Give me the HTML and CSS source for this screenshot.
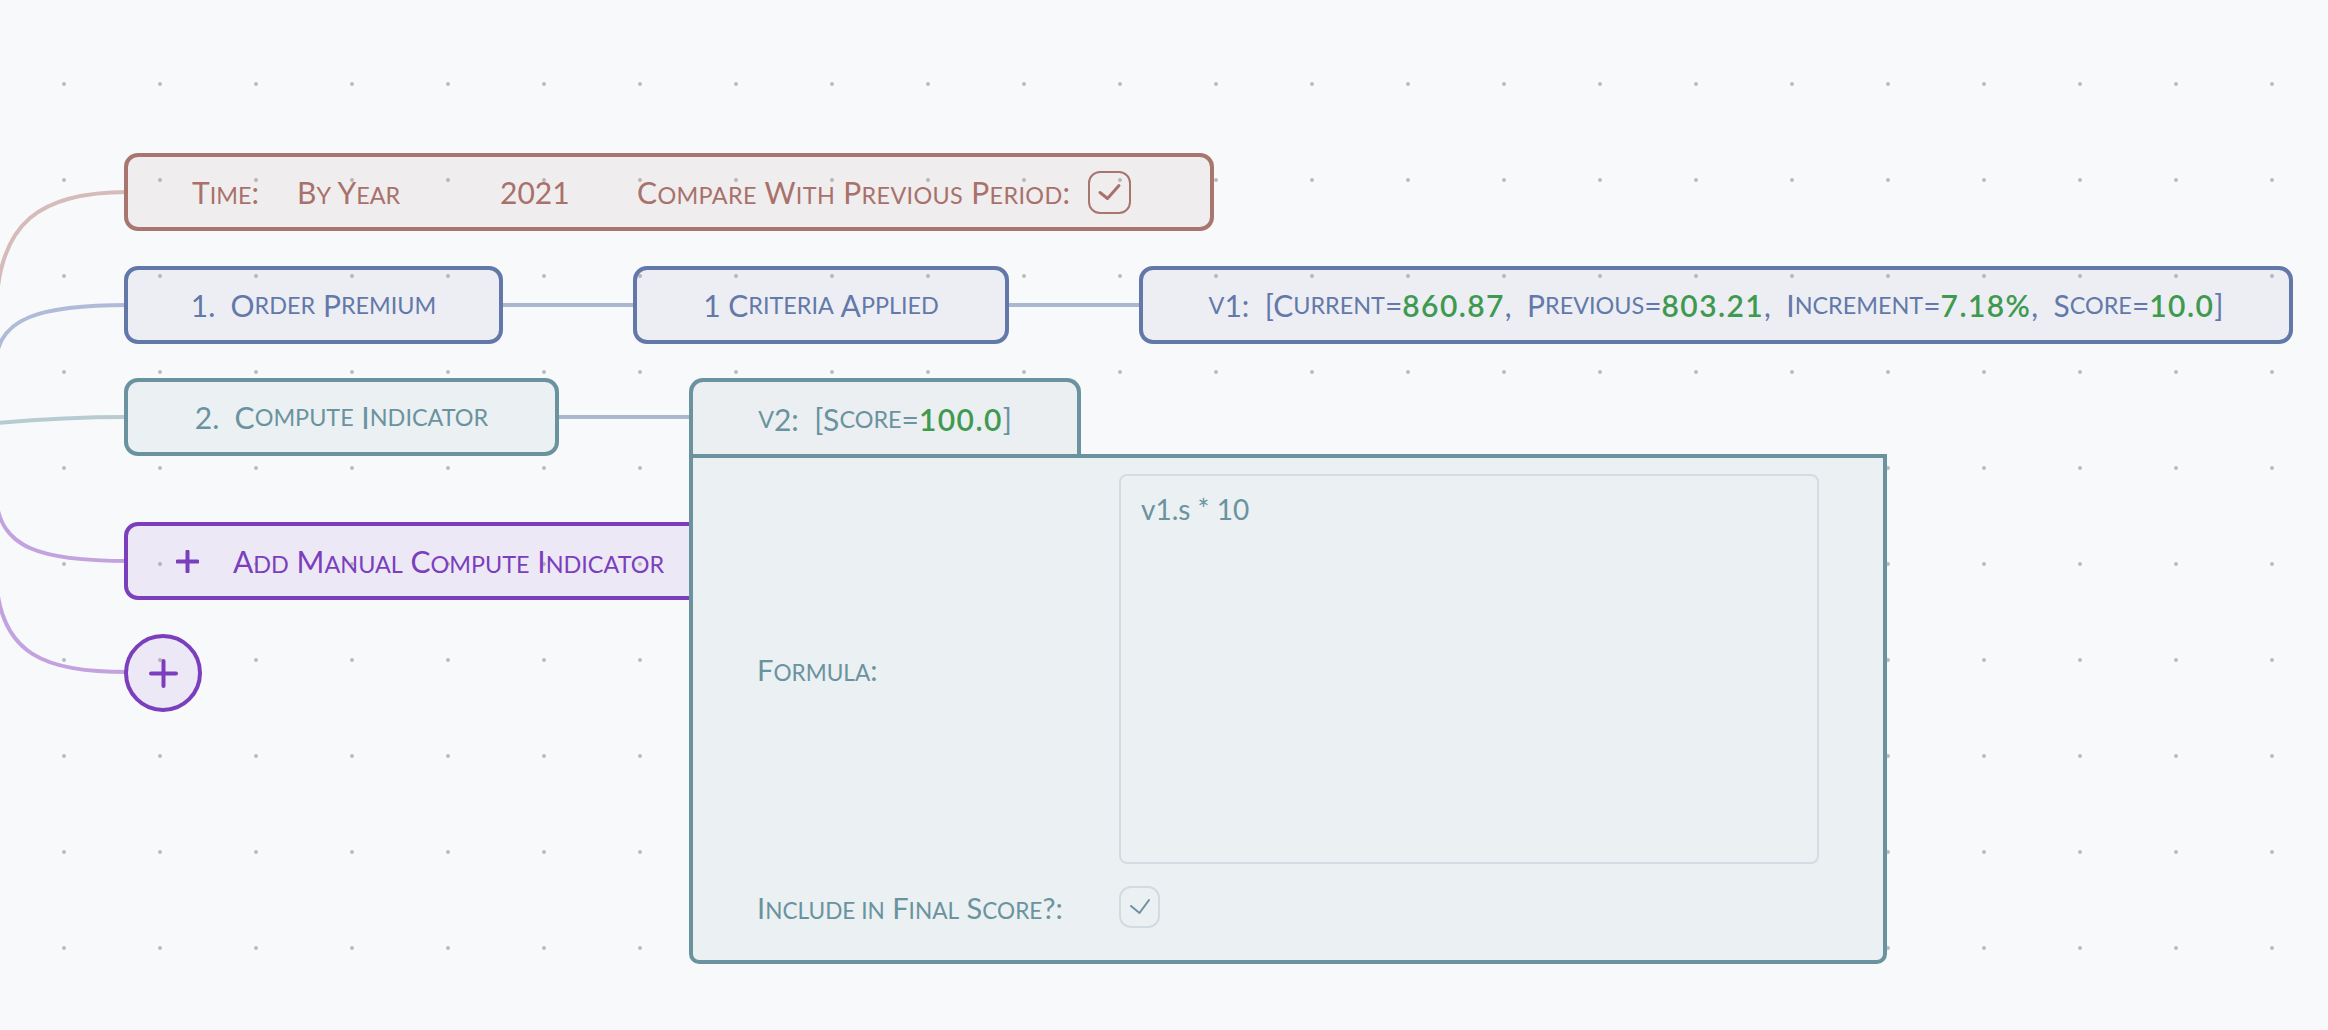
FILE: index.html
```html
<!DOCTYPE html>
<html>
<head>
<meta charset="utf-8">
<title>Flow</title>
<link rel="stylesheet" href="styles.css">
</head>
<body>
<div class="canvas">
  <svg class="edges" width="2328" height="1030" viewBox="0 0 2328 1030">
    <path class="e e-time" d="M -4 312 C -2 222, 40 192, 128 192"/>
    <path class="e e-blue" d="M -4 362 C -2 318, 40 305, 128 305"/>
    <path class="e e-teal" d="M -4 423 C 40 419, 80 417, 128 417"/>
    <path class="e e-purple" d="M -4 498 C 0 548, 40 561, 128 561"/>
    <path class="e e-purple" d="M -4 578 C 0 655, 45 672, 128 672"/>
  </svg>

  <div class="flow">
    <div class="row">
      <div class="node time">
        <span class="t-key">T<small>ime</small>:</span>
        <span class="t-sel">B<small>y</small> Y<small>ear</small></span>
        <span class="t-year">2021</span>
        <span class="t-cmp">C<small>ompare</small> W<small>ith</small> P<small>revious</small> P<small>eriod</small>:</span>
        <span class="chk chk-time">
          <svg width="43" height="43" viewBox="0 0 43 43"><path d="M12 21.5 L19.5 27.5 L31 14.5"/></svg>
        </span>
      </div>
    </div>

    <div class="row row-order">
      <div class="node blue n-order">1.  O<small>rder</small> P<small>remium</small></div>
      <div class="link"></div>
      <div class="node blue n-crit">1 C<small>riteria</small> A<small>pplied</small></div>
      <div class="link"></div>
      <div class="node blue n-v1"><small>v</small>1:  [C<small>urrent</small>=<b>860.87</b>,  P<small>revious</small>=<b>803.21</b>,  I<small>ncrement</small>=<b>7.18%</b>,  S<small>core</small>=<b>10.0</b>]</div>
    </div>

    <div class="row row-compute">
      <div class="node teal n-compute">2.  C<small>ompute</small> I<small>ndicator</small></div>
      <div class="link"></div>
      <div class="v2">
        <div class="tab"><small>v</small>2:  [S<small>core</small>=<b>100.0</b>]</div>
        <div class="panel">
          <div class="p-label">F<small>ormula</small>:</div>
          <textarea class="formula" spellcheck="false">v1.s * 10</textarea>
          <div class="p-label">I<small>nclude in</small> F<small>inal</small> S<small>core</small>?:</div>
          <div class="chk chk-inc">
            <svg width="41" height="42" viewBox="0 0 41 42"><path d="M12 20 L20.5 27 L30 14"/></svg>
          </div>
        </div>
      </div>
    </div>

    <div class="row row-add">
      <div class="node purple n-add">
        <svg class="plus-sm" width="23" height="23" viewBox="0 0 23 23"><path d="M11.5 1.5 V21.5 M1.5 11.5 H21.5"/></svg>
        <span>A<small>dd</small> M<small>anual</small> C<small>ompute</small> I<small>ndicator</small></span>
      </div>
    </div>

    <div class="row">
      <div class="circle">
        <svg width="29" height="29" viewBox="0 0 29 29"><path d="M14.5 2 V27 M2 14.5 H27"/></svg>
      </div>
    </div>
  </div>
</div>
</body>
</html>
```

FILE: styles.css
```css
* { box-sizing: border-box; }

html, body {
  margin: 0;
  padding: 0;
}

body {
  background: #f8f9fb;
  font-family: Lato, "Open Sans", "Liberation Sans", sans-serif;
}

.canvas {
  position: relative;
  width: 2328px;
  height: 1030px;
  overflow: hidden;
  background-color: #f8f9fb;
  background-image: radial-gradient(circle, #bdbdbd 1.5px, rgba(189,189,189,0) 2.3px);
  background-size: 96px 96px;
  background-position: 16px 36px;
}

.edges {
  position: absolute;
  left: 0;
  top: 0;
  z-index: 0;
}

.e { fill: none; stroke-width: 4; }
.e-time { stroke: #d5bbb9; }
.e-blue { stroke: #b0bcd7; }
.e-teal { stroke: #b7cbd1; }
.e-purple { stroke: #c3a3df; }

.flow {
  position: relative;
  z-index: 1;
  padding: 153px 0 0 124px;
  display: flex;
  flex-direction: column;
  gap: 34px;
}

.row {
  display: flex;
  align-items: center;
  height: 78px;
}

.row-order { margin-top: 1px; }
.row-add { margin-top: 32px; }

.row-compute {
  align-items: flex-start;
  position: relative;
  z-index: 3;
}

.node {
  flex: none;
  height: 78px;
  border: 4px solid;
  border-radius: 14px;
  display: flex;
  align-items: center;
  justify-content: center;
  font-size: 30px;
  white-space: pre;
}

small {
  font-size: 0.78em;
  text-transform: uppercase;
}

b {
  font-weight: 600;
  color: #3f9a50;
  letter-spacing: 1.4px;
}

.link {
  flex: none;
  width: 130px;
  height: 4px;
  background: #abb6cf;
}

.row-compute .link { margin-top: 37px; }

/* time node */
.time {
  width: 1090px;
  justify-content: flex-start;
  padding-left: 64px;
  color: #a8716b;
  border-color: #a8756f;
  background: rgba(168, 117, 111, 0.09);
}

.t-key { width: 105px; }
.t-sel { width: 203px; }
.t-year { width: 137px; }
.t-cmp { margin-right: 18px; letter-spacing: 0.35px; }

.chk {
  display: flex;
  align-items: center;
  justify-content: center;
  flex: none;
}

.chk svg { display: block; }
.chk path { fill: none; stroke-linecap: round; stroke-linejoin: round; }

.chk-time {
  width: 43px;
  height: 43px;
  border: 2px solid #a8756f;
  border-radius: 12px;
}

.chk-time svg { margin: -2px; }
.chk-time path { stroke: #a8716b; stroke-width: 3; }

/* blue nodes */
.blue {
  color: #6379a9;
  border-color: #6278a9;
  background: rgba(98, 120, 169, 0.08);
}

.n-order { width: 379px; }
.n-crit { width: 376px; }
.n-v1 { width: 1154px; }

/* teal nodes */
.teal {
  color: #6a939f;
  border-color: #6a939f;
  background: rgba(106, 147, 159, 0.087);
}

.n-compute { width: 435px; }

.v2 {
  flex: none;
  display: flex;
  flex-direction: column;
}

.tab {
  width: 392px;
  height: 76px;
  border: 4px solid #6a939f;
  border-bottom: none;
  border-radius: 14px 14px 0 0;
  background: #ebeff2;
  color: #6a939f;
  font-size: 30px;
  white-space: pre;
  display: flex;
  align-items: center;
  justify-content: center;
  padding-top: 2px;
}

.panel {
  width: 1198px;
  height: 510px;
  border: 4px solid #6a939f;
  border-radius: 0 0 10px 10px;
  background: #ebf0f2;
  padding: 16px 64px 32px;
  display: grid;
  grid-template-columns: 362px 700px;
  grid-template-rows: 390px 42px;
  row-gap: 22px;
  align-items: center;
  color: #6a939f;
}

.p-label {
  font-size: 29px;
  white-space: pre;
}

.formula {
  width: 700px;
  height: 390px;
  margin: 0;
  border: 2px solid #d4dce3;
  border-radius: 8px;
  background: transparent;
  padding: 16px 20px;
  font-family: Lato, "Open Sans", "Liberation Sans", sans-serif;
  font-size: 28px;
  line-height: 34px;
  color: #6a939f;
  resize: none;
  outline: none;
}

.chk-inc {
  width: 41px;
  height: 42px;
  border: 2px solid #d3dbe2;
  border-radius: 12px;
}

.chk-inc svg { margin: -2px; }
.chk-inc path { stroke: #6a939f; stroke-width: 2; }

/* purple */
.purple {
  color: #7b3fbd;
  border-color: #7b3fbd;
  background: rgba(123, 63, 189, 0.085);
}

.n-add {
  justify-content: flex-start;
  padding: 0 64px 0 48px;
}

.plus-sm {
  flex: none;
  margin-right: 34px;
}

.plus-sm path,
.circle path {
  fill: none;
  stroke: #7b3fbd;
  stroke-width: 4;
  stroke-linecap: round;
}

.circle {
  flex: none;
  width: 78px;
  height: 78px;
  border: 4px solid #7b3fbd;
  border-radius: 50%;
  background: rgba(123, 63, 189, 0.085);
  display: flex;
  align-items: center;
  justify-content: center;
}

.circle svg { display: block; }
```
